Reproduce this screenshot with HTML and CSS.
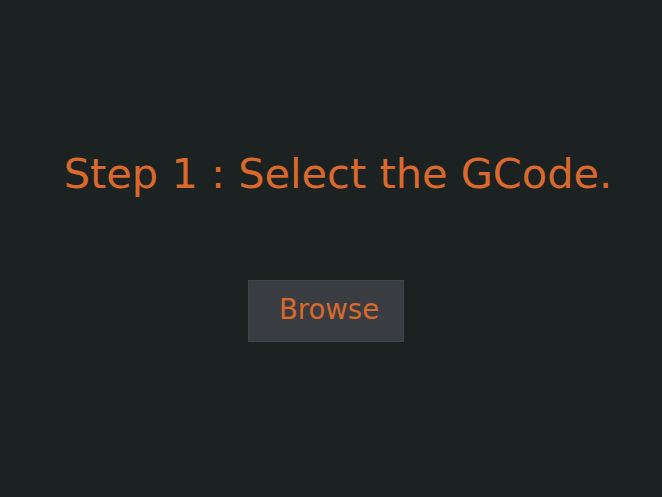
FILE: index.html
```html
<!DOCTYPE html>
<html>
<head>
<meta charset="utf-8">
<link rel="stylesheet" href="styles.css">
</head>
<body>
<main class="screen">
  <h1 class="title">Step 1 : Select the GCode.</h1>
  <button class="browse">Browse</button>
</main>
</body>
</html>
```
FILE: styles.css
```css
html, body {
  margin: 0;
  height: 100%;
  background: #1c2121;
}
.screen {
  display: flex;
  flex-direction: column;
  align-items: center;
  padding-top: 148px;
  font-family: "DejaVu Sans", sans-serif;
}
.title {
  margin: 0 0 0 14px;
  font-weight: normal;
  font-size: 41.5px;
  line-height: 52px;
  color: #d9692c;
}
.browse {
  margin: 80px 0 0 -10px;
  width: 156px;
  height: 62px;
  padding: 0 0 4px 6px;
  background: #393d41;
  border: 1px solid #3f4447;
  color: #d9692c;
  font-family: "DejaVu Sans", sans-serif;
  font-size: 27.5px;
}
```
